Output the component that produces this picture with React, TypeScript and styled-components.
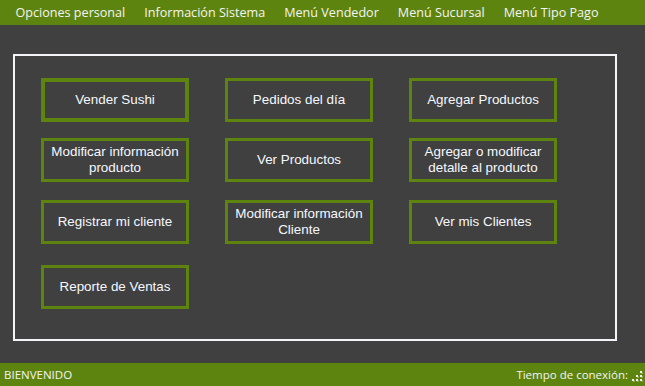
import styled, { createGlobalStyle } from "styled-components";

const GlobalStyle = createGlobalStyle`
  html, body {
    margin: 0;
    padding: 0;
    background: #404040;
  }
  #root {
    height: 386px;
  }
`;

const green = "#5e8410";

const Window = styled.div`
  width: 645px;
  height: 386px;
  display: flex;
  flex-direction: column;
  background: #404040;
  overflow: hidden;
`;

const MenuBar = styled.div`
  height: 25px;
  flex: none;
  display: flex;
  align-items: center;
  padding-left: 6px;
  background: ${green};
`;

const MenuItem = styled.div`
  padding: 0 9.5px;
  font-family: "Open Sans", "Noto Sans", sans-serif;
  font-size: 12.6px;
  color: #f4f4f4;
  white-space: nowrap;
`;

const Main = styled.div`
  flex: 1;
  padding: 29px 28px 22px 13px;
  display: flex;
`;

const Panel = styled.div`
  flex: 1;
  border: 2px solid #f2f4f8;
  padding: 22px 0 0 26px;
  display: flex;
  flex-direction: column;
`;

const Row = styled.div<{ $gap: number }>`
  display: flex;
  gap: 36px;
  margin-top: ${(p) => p.$gap}px;
`;

const Button = styled.button<{ $focused?: boolean }>`
  width: 148px;
  height: 44px;
  box-sizing: border-box;
  border: ${(p) => (p.$focused ? 4 : 3)}px solid ${green};
  background: #404040;
  color: #f6f8ff;
  font-family: "Liberation Sans", Arial, sans-serif;
  font-size: 13.4px;
  line-height: 16px;
  padding: 0 4px;
  text-align: center;
  cursor: pointer;
`;

const StatusBar = styled.div`
  height: 23px;
  flex: none;
  display: flex;
  align-items: center;
  justify-content: space-between;
  padding-left: 4px;
  background: ${green};
  font-family: "Open Sans", "Noto Sans", sans-serif;
  font-size: 11.5px;
  color: #f4f4f4;
`;

const StatusRight = styled.div`
  display: flex;
  align-items: center;
  gap: 3px;
  align-self: stretch;
`;

const Grip = styled.svg`
  width: 14px;
  height: 23px;
  align-self: flex-end;
`;

const rows: { gap: number; items: string[][] }[] = [
  { gap: 0, items: [["Vender Sushi"], ["Pedidos del día"], ["Agregar Productos"]] },
  {
    gap: 16,
    items: [
      ["Modificar información", "producto"],
      ["Ver Productos"],
      ["Agregar o modificar", "detalle al producto"],
    ],
  },
  {
    gap: 18,
    items: [["Registrar mi cliente"], ["Modificar información", "Cliente"], ["Ver mis Clientes"]],
  },
  { gap: 21, items: [["Reporte de Ventas"]] },
];

const menu = [
  "Opciones personal",
  "Información Sistema",
  "Menú Vendedor",
  "Menú Sucursal",
  "Menú Tipo Pago",
];

const gripDots = [
  [9, 8],
  [5, 12],
  [9, 12],
  [1, 16],
  [5, 16],
  [9, 16],
];

function App() {
  return (
    <Window>
      <GlobalStyle />
      <MenuBar>
        {menu.map((m) => (
          <MenuItem key={m}>{m}</MenuItem>
        ))}
      </MenuBar>
      <Main>
        <Panel>
          {rows.map((row, i) => (
            <Row key={i} $gap={row.gap}>
              {row.items.map((lines, j) => (
                <Button key={j} $focused={i === 0 && j === 0}>
                  {lines.map((l, k) => (
                    <span key={k}>
                      {k > 0 && <br />}
                      {l}
                    </span>
                  ))}
                </Button>
              ))}
            </Row>
          ))}
        </Panel>
      </Main>
      <StatusBar>
        <span>BIENVENIDO</span>
        <StatusRight>
          <span>Tiempo de conexión:</span>
          <Grip viewBox="0 0 14 23">
            {gripDots.map(([x, y], i) => (
              <g key={i}>
                <rect x={x + 1} y={y + 1} width={2} height={2} fill="#8aa84a" />
                <rect x={x} y={y} width={2} height={2} fill="#f0f0f0" />
              </g>
            ))}
          </Grip>
        </StatusRight>
      </StatusBar>
    </Window>
  );
}

export default App;
